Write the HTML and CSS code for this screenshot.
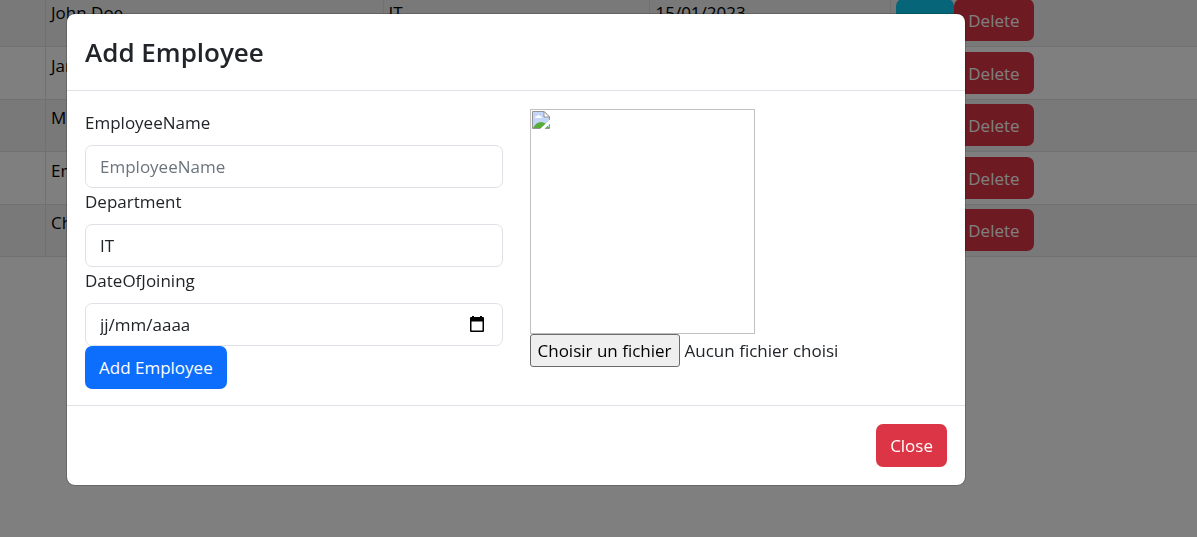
FILE: index.html
```html
<!DOCTYPE html>
<html lang="en">
<head>
<meta charset="utf-8">
<title>Add Employee</title>
<link rel="stylesheet" href="styles.css">
</head>
<body>
<main class="page">
  <table class="employees">
    <colgroup>
      <col class="col-id"><col class="col-name"><col class="col-department"><col class="col-date"><col>
    </colgroup>
    <tbody>
      <tr><td></td><td>John Doe</td><td>IT</td><td>15/01/2023</td><td><div class="actions"><button class="btn btn-info" type="button">Edit</button><button class="btn btn-danger" type="button">Delete</button></div></td></tr>
      <tr><td></td><td>Jane</td><td></td><td></td><td><div class="actions"><button class="btn btn-info" type="button">Edit</button><button class="btn btn-danger" type="button">Delete</button></div></td></tr>
      <tr><td></td><td>Mi</td><td></td><td></td><td><div class="actions"><button class="btn btn-info" type="button">Edit</button><button class="btn btn-danger" type="button">Delete</button></div></td></tr>
      <tr><td></td><td>Em</td><td></td><td></td><td><div class="actions"><button class="btn btn-info" type="button">Edit</button><button class="btn btn-danger" type="button">Delete</button></div></td></tr>
      <tr><td></td><td>Ch</td><td></td><td></td><td><div class="actions"><button class="btn btn-info" type="button">Edit</button><button class="btn btn-danger" type="button">Delete</button></div></td></tr>
    </tbody>
  </table>
</main>

<div class="backdrop">
  <section class="modal" role="dialog" aria-modal="true" aria-labelledby="modal-title">
    <header class="modal-header">
      <h1 class="modal-title" id="modal-title">Add Employee</h1>
    </header>
    <div class="modal-body">
      <form class="form">
        <div class="field">
          <label class="field-label" for="employee-name">EmployeeName</label>
          <input class="control" id="employee-name" type="text" placeholder="EmployeeName">
        </div>
        <div class="field">
          <label class="field-label" for="department">Department</label>
          <select class="control" id="department"><option>IT</option></select>
        </div>
        <div class="field">
          <label class="field-label" for="joining">DateOfJoining</label>
          <div class="control date-control">
            <input class="date-input" id="joining" type="text" value="jj/mm/aaaa">
            <button class="date-button" type="button" aria-label="Calendar">
              <svg width="18" height="18" viewBox="0 0 18 18" aria-hidden="true"><path fill="#000" fill-rule="evenodd" d="M4 0h2v1h6V0h2v1h1q1 0 1 1v13q0 1-1 1H3q-1 0-1-1V2q0-1 1-1h1zM3.500 5.500v9h11v-9z"/></svg>
            </button>
          </div>
        </div>
        <button class="btn btn-primary" type="button">Add Employee</button>
      </form>
      <div class="photo">
        <div class="photo-frame" role="img">
          <svg width="18" height="18" viewBox="0 0 18 18" aria-hidden="true">
            <path fill="#c3d5f8" d="M.5.5H12L17.500 6v11.500H.5z"/>
            <path fill="#fff" d="M3 7q0-2 2-2 1-2 3 0 2 0 2 2z"/>
            <path fill="#58ac3c" d="M1 17q3-6 8-6 5 0 8 6z"/>
            <path fill="none" stroke="#949494" d="M.5.5H12L17.500 6v11.500H.5z"/>
            <path fill="#fff" stroke="#949494" d="M12 .5V6h5.500z"/>
            <path fill="#fff" d="M18 8.500v4L12.500 18H8z"/>
          </svg>
        </div>
        <div class="file">
          <input class="file-input" id="photo-file" type="file">
          <label class="file-button" for="photo-file">Choisir un fichier</label>
          <span>Aucun fichier choisi</span>
        </div>
      </div>
    </div>
    <footer class="modal-footer">
      <button class="btn btn-danger" type="button">Close</button>
    </footer>
  </section>
</div>
</body>
</html>
```

FILE: styles.css
```css
*, *::before, *::after { box-sizing: border-box; }

body {
  margin: 0;
  background: #fff;
  color: #212529;
  font: 400 17px/27px "Segoe UI", "Open Sans", "Noto Sans", sans-serif;
}

button, input, select { font: inherit; color: inherit; }

/* Employee table, scrolled under the dialog */
.page {
  height: 100vh;
  overflow: hidden;
}

.employees {
  width: 100%;
  margin-top: -5px;
  border-collapse: separate;
  border-spacing: 0;
  table-layout: fixed;
  color: #000;
}

.col-id { width: 45px; }
.col-name { width: 28.2%; }
.col-department { width: 22.3%; }
.col-date { width: 20.1%; }

.employees td {
  padding: 5px;
  border-bottom: 1px solid #dee2e6;
  vertical-align: top;
}

.employees td + td { border-left: 1px solid #dee2e6; }

.employees tr:nth-child(odd) td {
  padding-top: 4px;
  background: #f2f2f2;
}

.actions { display: flex; }

.btn {
  height: 42px;
  padding: 0 14px;
  border: 0;
  border-radius: 7px;
  color: #fff;
  cursor: pointer;
}

.btn-info { background: #0dcaf0; color: #000; }
.btn-danger { background: #dc3545; }
.btn-primary { background: #0d6efd; }

/* Dialog */
.backdrop {
  position: fixed;
  inset: 0;
  display: flex;
  align-items: flex-start;
  justify-content: center;
  padding: 13px 165px 13px 0;
  overflow: auto;
  background: rgba(0, 0, 0, .5);
}

.modal {
  width: 100%;
  max-width: 900px;
  background: #fff;
  background-clip: padding-box;
  border: 1px solid rgba(0, 0, 0, .18);
  border-radius: 9px;
}

.modal .btn { height: 43px; }

.modal-header {
  padding: 18px;
  border-bottom: 1px solid #dee2e6;
}

.modal-title {
  margin: 0;
  font-size: 26px;
  font-weight: 600;
  line-height: 40px;
}

.modal-body {
  display: grid;
  grid-template-columns: 1fr 1fr;
  gap: 27px;
  padding: 18px 18px 16px;
}

.form {
  display: flex;
  flex-direction: column;
  align-items: flex-start;
}

.field {
  display: flex;
  flex-direction: column;
  gap: 9px;
  width: 100%;
}

.control {
  width: 100%;
  height: 43px;
  padding: 0 14px;
  border: 1px solid #dee2e6;
  border-radius: 7px;
  background: #fff;
  appearance: none;
}

.control::placeholder { color: #6c757d; opacity: 1; }

.date-control {
  display: flex;
  align-items: center;
  padding-right: 16px;
}

.date-input {
  flex: 1;
  min-width: 0;
  padding: 0;
  border: 0;
  background: none;
}

.date-button {
  display: flex;
  padding: 0;
  border: 0;
  background: none;
}

.photo-frame {
  width: 225px;
  height: 225px;
  padding: 1px;
  border: 1px solid #c0c0c0;
}

.photo-frame svg { display: block; }

.file {
  display: flex;
  align-items: center;
  gap: 5px;
}

.file-input {
  position: absolute;
  width: 1px;
  height: 1px;
  opacity: 0;
}

.file-button {
  padding: 2px 7px;
  border: 1px solid #6b6b6b;
  border-radius: 3px;
  background: #efefef;
  color: #000;
}

.modal-footer {
  display: flex;
  justify-content: flex-end;
  padding: 18px;
  border-top: 1px solid #dee2e6;
}
```
